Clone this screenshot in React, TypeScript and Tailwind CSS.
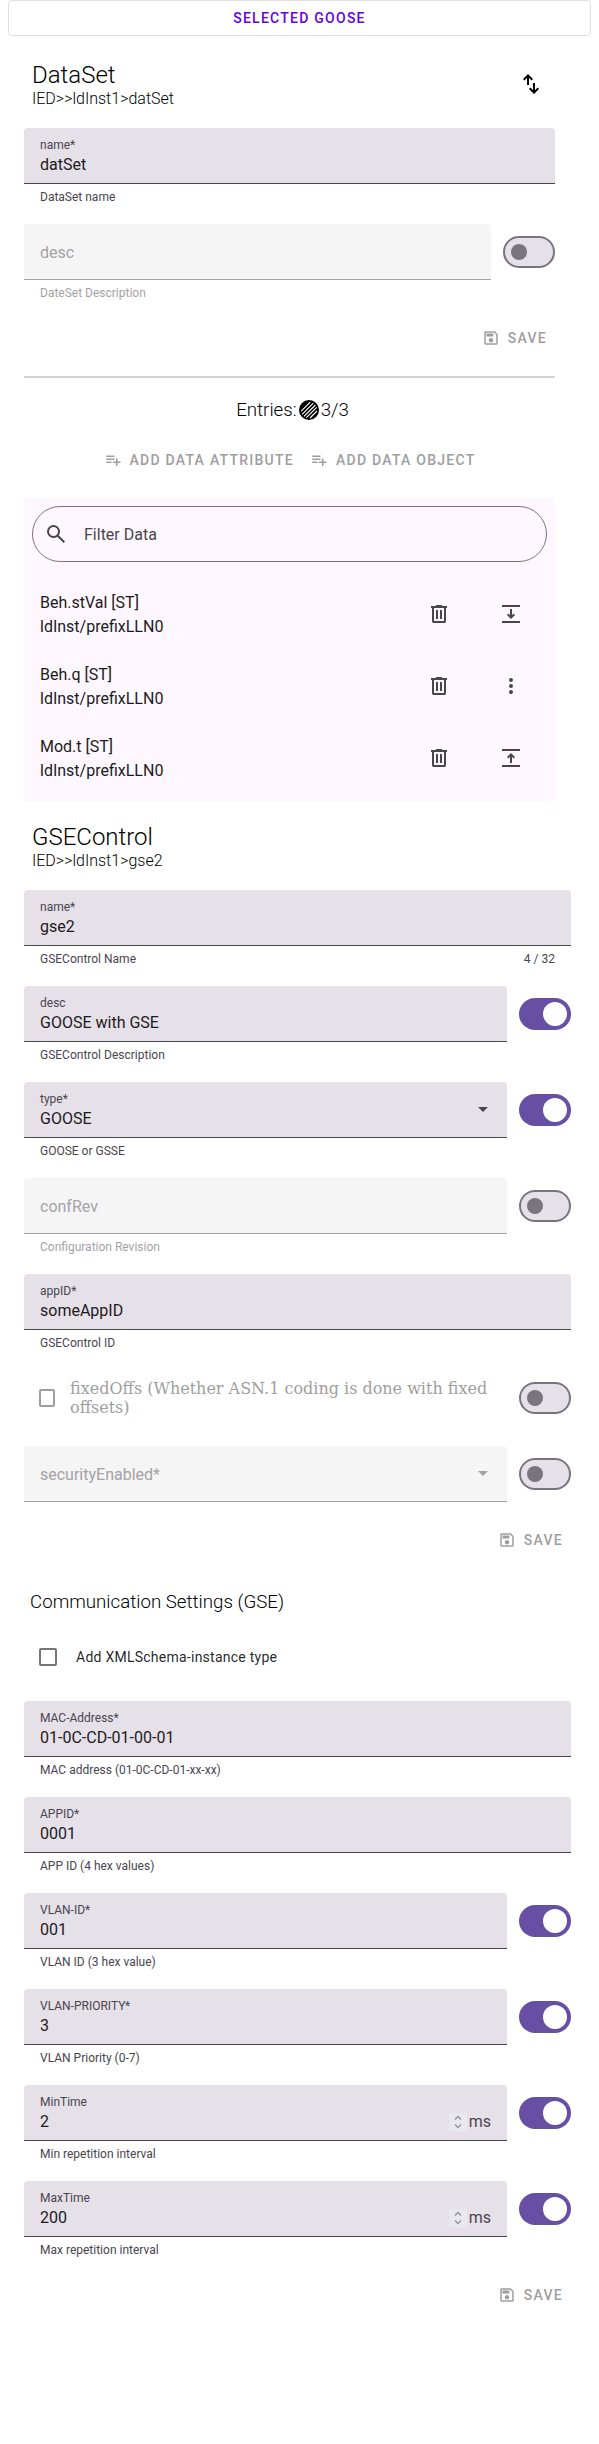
import React from "react";

function Icon({ d, size = "size-6", className = "" }: { d: string; size?: string; className?: string }) {
  return (
    <svg viewBox="0 0 24 24" className={`shrink-0 ${size} ${className}`} fill="currentColor">
      <path d={d} />
    </svg>
  );
}

const SAVE =
  "M17 3H5c-1.11 0-2 .9-2 2v14c0 1.1.89 2 2 2h14c1.1 0 2-.9 2-2V7l-4-4zm2 16H5V5h11.17L19 7.83V19zm-7-7c-1.66 0-3 1.34-3 3s1.34 3 3 3 3-1.34 3-3-1.34-3-3-3zM6 6h9v4H6z";
const PLAYLIST_ADD = "M14 10H3v2h11v-2zm0-4H3v2h11V6zm4 8v-4h-2v4h-4v2h4v4h2v-4h4v-2h-4zM3 16h7v-2H3v2z";
const SEARCH =
  "M19.6 21l-6.3-6.3A6.1 6.1 0 0 1 9.5 16 6.5 6.5 0 1 1 16 9.5c0 1.45-.5 2.8-1.3 3.8L21 19.6zM9.5 14a4.5 4.5 0 1 0 0-9 4.5 4.5 0 0 0 0 9z";
const DELETE =
  "M7 21c-.55 0-1.02-.2-1.41-.59C5.2 20.02 5 19.55 5 19V6H4V4h5V3h6v1h5v2h-1v13c0 .55-.2 1.02-.59 1.41-.39.39-.86.59-1.41.59zM17 6H7v13h10zM9 17h2V8H9zm4 0h2V8h-2z";
const MORE =
  "M12 20c-.55 0-1.02-.2-1.41-.59a2 2 0 0 1 0-2.82 2 2 0 0 1 2.82 0 2 2 0 0 1 0 2.82c-.39.39-.86.59-1.41.59zm0-6a2 2 0 1 1 0-4 2 2 0 0 1 0 4zm0-6a2 2 0 1 1 0-4 2 2 0 0 1 0 4z";
const BOTTOM = "M3 3h18v2H3zM3 19h18v2H3zM11 7h2v6.2l1.6-1.6L16 13l-4 4-4-4 1.4-1.4 1.6 1.6z";
const TOP = "M3 3h18v2H3zM3 19h18v2H3zM11 17h2v-6.2l1.6 1.6L16 11l-4-4-4 4 1.4 1.4 1.6-1.6z";
const SWAP =
  "M8 13V5.83L5.41 8.4 4 7l5-5 5 5-1.41 1.4L10 5.83V13zm7 9l-5-5 1.41-1.4L14 18.18V11h2v7.18l2.59-2.58L20 17z";

function Switch({ on = false }: { on?: boolean }) {
  return on ? (
    <div className="mt-3 flex h-8 w-13 shrink-0 items-center justify-end rounded-full bg-[#6750a4] pr-1">
      <div className="size-6 rounded-full bg-white" />
    </div>
  ) : (
    <div className="mt-3 flex h-8 w-13 shrink-0 items-center rounded-full border-2 border-[#79747e] bg-[#e6e0e9] pl-1.5">
      <div className="size-4 rounded-full bg-[#79747e]" />
    </div>
  );
}

function Spinner() {
  return (
    <svg viewBox="0 0 18 18" className="size-[18px]" fill="none">
      <rect width="18" height="18" fill="#e9e9ed" />
      <path d="M6 6.5 9 3.5l3 3M6 11.5l3 3 3-3" stroke="#8f8f9d" strokeWidth="1.3" />
    </svg>
  );
}

type FieldProps = {
  label: string;
  value?: string;
  help?: string;
  counter?: string;
  toggle?: boolean;
  select?: boolean;
  unit?: string;
};

function Field({ label, value, help, counter, toggle, select, unit }: FieldProps) {
  const off = value === undefined;
  return (
    <div className="flex h-24 gap-3">
      <div className="min-w-0 flex-1">
        <div
          className={`flex h-14 items-center rounded-t border-b px-4 ${
            off ? "border-[#a4a2a6] bg-[#f5f5f5] text-[#a4a2a6]" : "border-[#49454f] bg-[#e6e0e9] text-[#49454f]"
          }`}
        >
          {off ? (
            <span className="flex-1 pt-[3px] text-base">{label}</span>
          ) : (
            <div className="flex-1 pt-[3px]">
              <div className="text-xs leading-4">{label}</div>
              <div className="flex h-6 items-center text-base leading-6">
                <span className="flex-1 text-[#1d1b20]">{value}</span>
                {unit && <Spinner />}
                {unit && <span className="ml-0.5">{unit}</span>}
              </div>
            </div>
          )}
          {select && (
            <svg viewBox="0 0 10 5" className="mr-[3px] h-[5px] w-2.5" fill="currentColor">
              <path d="M0 0h10L5 5z" />
            </svg>
          )}
        </div>
        {help && (
          <div
            className={`flex justify-between px-4 pt-[5px] text-xs leading-4 ${off ? "text-[#a4a2a6]" : "text-[#49454f]"}`}
          >
            <span>{help}</span>
            {counter && <span>{counter}</span>}
          </div>
        )}
      </div>
      {toggle !== undefined && <Switch on={toggle} />}
    </div>
  );
}

function TextButton({ icon, children }: { icon: string; children: React.ReactNode }) {
  return (
    <button className="flex h-9 items-center gap-2 px-2 text-sm font-medium tracking-[1.25px] text-[#9e9e9e]">
      <Icon d={icon} size="size-[18px]" />
      {children}
    </button>
  );
}

function Heading({ title, path }: { title: string; path: string }) {
  return (
    <div className="px-2 pt-px font-light text-black">
      <h2 className="text-2xl leading-7">{title}</h2>
      <div className="text-base leading-[19px]">{path}</div>
    </div>
  );
}

function Entry({ name, icon }: { name: string; icon: string }) {
  return (
    <div className="flex h-18 items-center px-4 text-base leading-6 text-[#1d1b20]">
      <div className="flex-1 pt-0.5">
        <div>{name}</div>
        <div>ldInst/prefixLLN0</div>
      </div>
      <div className="flex gap-12 pr-4 text-[#49454f]">
        <Icon d={DELETE} />
        <Icon d={icon} />
      </div>
    </div>
  );
}

export default function App() {
  return (
    <div className="h-[2444px] bg-white font-[Roboto,sans-serif]">
      <button className="mx-2 flex h-9 w-[583px] items-center justify-center rounded border border-[#e0e0e0] text-sm font-medium tracking-[1.25px] text-[#6200ee]">
        SELECTED GOOSE
      </button>

      <section className="ml-6 w-[531px]">
        <div className="flex h-[92px] items-start justify-between pt-6">
          <Heading title="DataSet" path="IED>>ldInst1>datSet" />
          <div className="flex size-12 items-center justify-center">
            <Icon d={SWAP} />
          </div>
        </div>
        <Field label="name*" value="datSet" help="DataSet name" />
        <Field label="desc" help="DateSet Description" toggle={false} />
        <div className="flex h-14 justify-end">
          <TextButton icon={SAVE}>SAVE</TextButton>
        </div>
        <div className="h-0.5 bg-[#d3d3d3]" />
        <div className="flex h-16 items-center justify-center pl-1.5 text-[18.72px] leading-7 font-light text-black">
          Entries:
          <svg viewBox="0 0 24 24" className="size-6">
            <circle cx="12" cy="12" r="10" fill="#000" />
            <path
              d="M4.2 13.2 13.2 4.2M5.1 16.3 16.3 5.1M7 18.4 18.4 7M9.3 19.7l10.4-10.4M13 20l7-7"
              stroke="#fff"
              strokeWidth="1.1"
            />
          </svg>
          3/3
        </div>
        <div className="flex h-14 justify-center">
          <TextButton icon={PLAYLIST_ADD}>ADD DATA ATTRIBUTE</TextButton>
          <TextButton icon={PLAYLIST_ADD}>ADD DATA OBJECT</TextButton>
        </div>
        <div className="h-[304px] bg-[#fef7ff] p-2">
          <div className="mb-4 flex h-14 items-center gap-4 rounded-full border border-[#79747e] px-[11px] text-base text-[#49454f]">
            <Icon d={SEARCH} />
            <span className="pt-0.5">Filter Data</span>
          </div>
          <div className="-mx-2">
            <Entry name="Beh.stVal [ST]" icon={BOTTOM} />
            <Entry name="Beh.q [ST]" icon={MORE} />
            <Entry name="Mod.t [ST]" icon={TOP} />
          </div>
        </div>
      </section>

      <section className="ml-6 w-[547px]">
        <div className="h-[88px] pt-5">
          <Heading title="GSEControl" path="IED>>ldInst1>gse2" />
        </div>
        <Field label="name*" value="gse2" help="GSEControl Name" counter="4 / 32" />
        <Field label="desc" value="GOOSE with GSE" help="GSEControl Description" toggle={true} />
        <Field label="type*" value="GOOSE" help="GOOSE or GSSE" toggle={true} select />
        <Field label="confRev" help="Configuration Revision" toggle={false} />
        <Field label="appID*" value="someAppID" help="GSEControl ID" />
        <div className="flex h-19 gap-3">
          <div className="flex h-14 flex-1 items-center gap-[15px] pl-[15px] text-[#9e9e9e]">
            <div className="h-[18px] w-4 shrink-0 rounded-xs border-2" />
            <div className="font-['DejaVu_Serif',serif] text-base leading-[19px]">
              fixedOffs (Whether ASN.1 coding is done with fixed offsets)
            </div>
          </div>
          <Switch />
        </div>
        <Field label="securityEnabled*" toggle={false} select />
        <div className="-mt-5 flex h-9 justify-end">
          <TextButton icon={SAVE}>SAVE</TextButton>
        </div>

        <h3 className="mt-8 pl-1.5 text-[18.72px] leading-6 font-light text-black">Communication Settings (GSE)</h3>
        <div className="flex h-[87px] items-center gap-[19px] pb-px pl-[15px] text-sm tracking-[0.25px] text-black/87">
          <div className="size-[18px] rounded-xs border-2 border-[#757575]" />
          Add XMLSchema-instance type
        </div>
        <Field label="MAC-Address*" value="01-0C-CD-01-00-01" help="MAC address (01-0C-CD-01-xx-xx)" />
        <Field label="APPID*" value="0001" help="APP ID (4 hex values)" />
        <Field label="VLAN-ID*" value="001" help="VLAN ID (3 hex value)" toggle={true} />
        <Field label="VLAN-PRIORITY*" value="3" help="VLAN Priority (0-7)" toggle={true} />
        <Field label="MinTime" value="2" help="Min repetition interval" toggle={true} unit="ms" />
        <Field label="MaxTime" value="200" help="Max repetition interval" toggle={true} unit="ms" />
        <div className="flex h-9 justify-end">
          <TextButton icon={SAVE}>SAVE</TextButton>
        </div>
      </section>
    </div>
  );
}
